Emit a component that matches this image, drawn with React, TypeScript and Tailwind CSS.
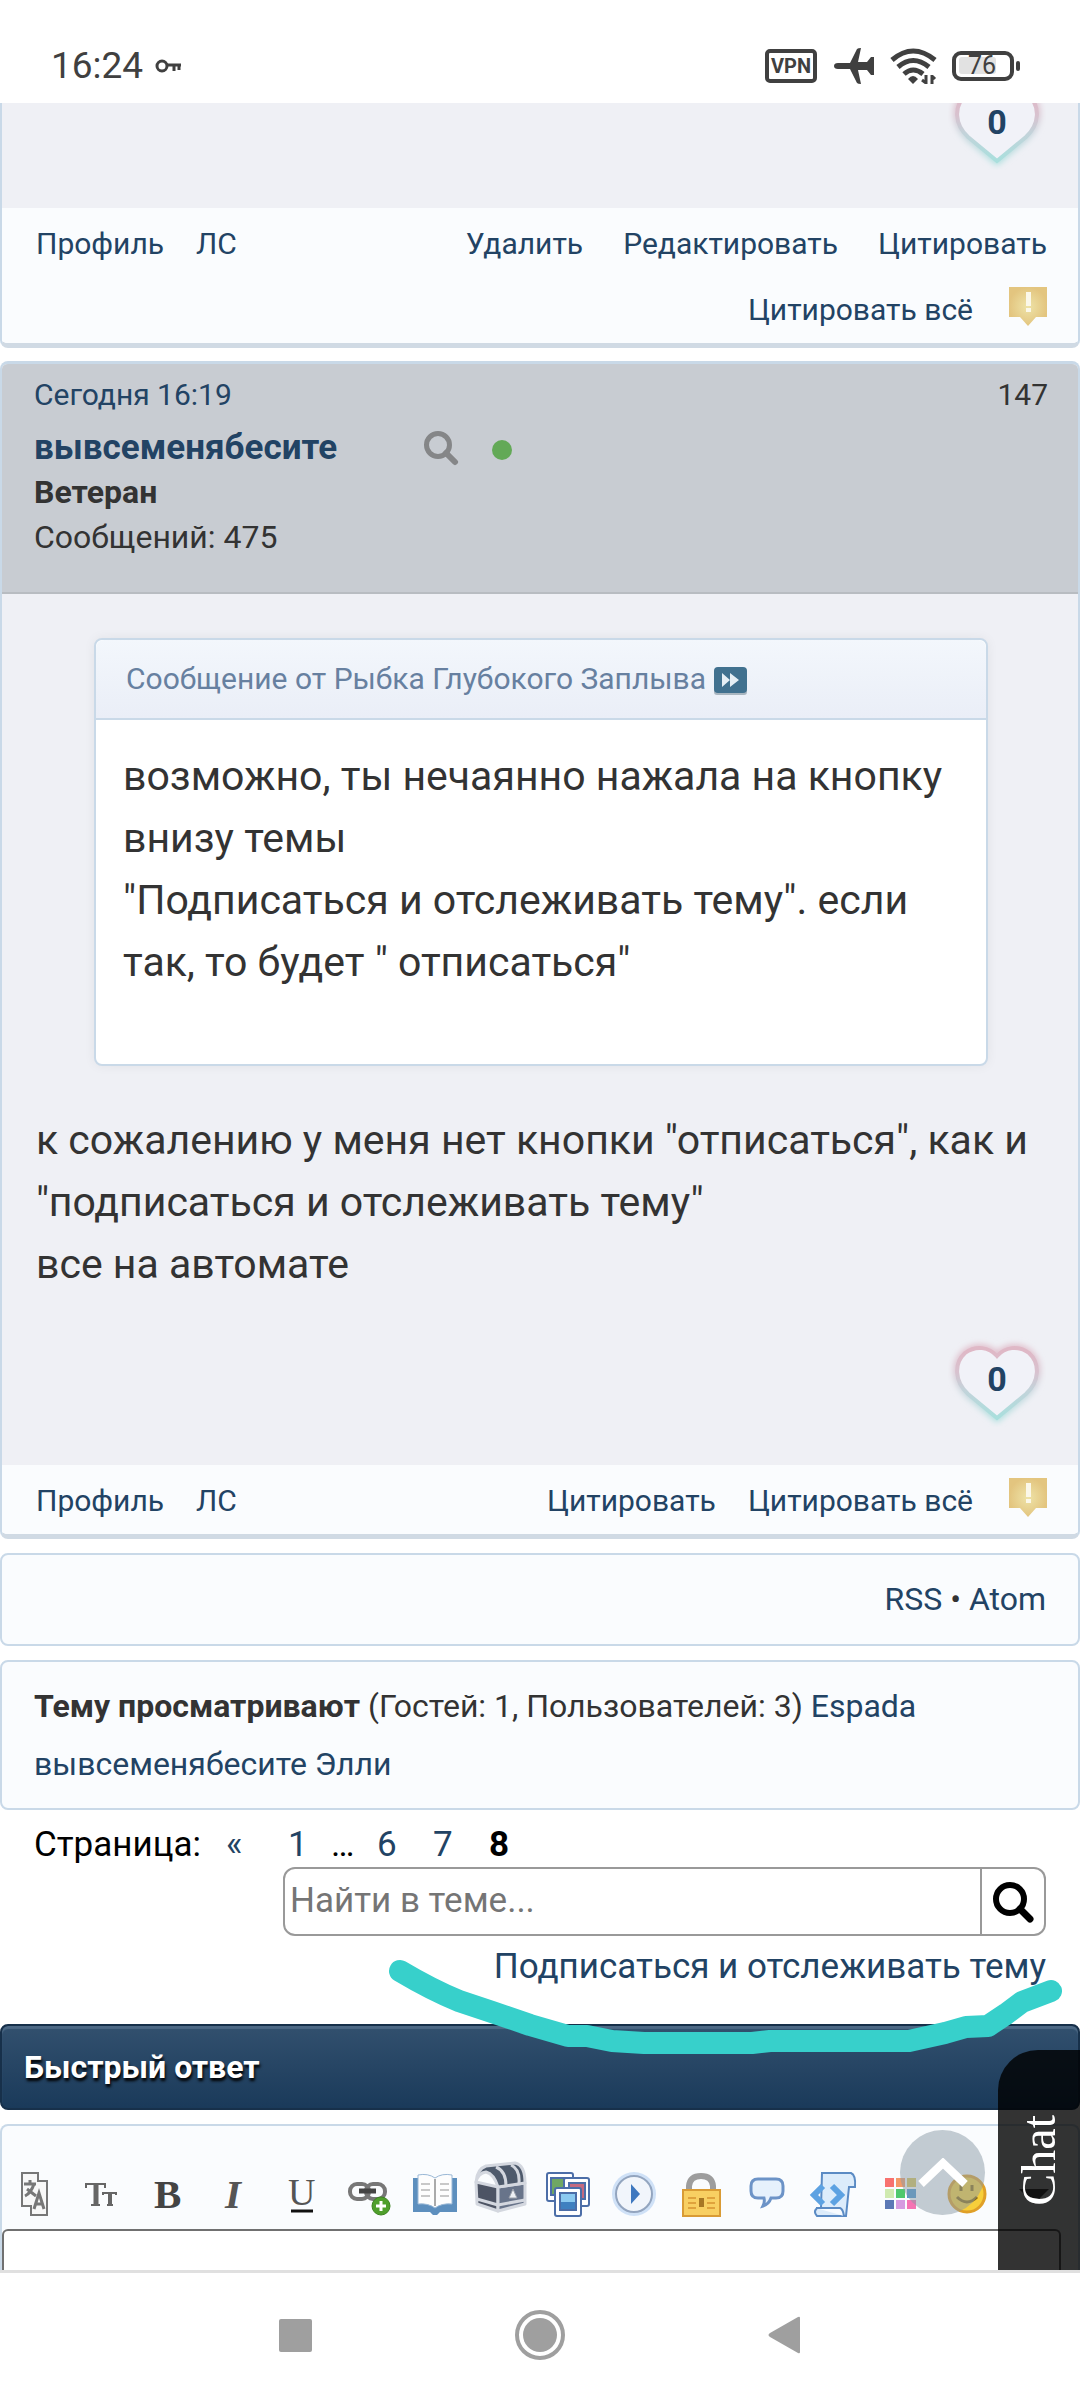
import React from 'react';

const LINK = 'text-[#224364]';

function A({ children, className = '' }: { children: React.ReactNode; className?: string }) {
  return (
    <a href="#" className={`${LINK} ${className}`}>
      {children}
    </a>
  );
}

function StatusBar() {
  return (
    <header className="flex h-[103px] shrink-0 items-center justify-between bg-white pt-7 pr-[60px] pl-[51px] text-[#404040]">
      <div className="flex items-center gap-3">
        <span className="text-[37px] leading-[44px]">16:24</span>
        <svg width="26" height="14" viewBox="0 0 26 14" fill="none" stroke="currentColor" strokeWidth="3">
          <circle cx="7" cy="7" r="5" />
          <path d="M12 6h14M19 6v6M24 6v5" />
        </svg>
      </div>
      <div className="flex items-center">
        <span className="flex h-[34px] w-[52px] items-center justify-center rounded-[5px] border-4 border-[#404040] text-[20px] leading-none font-bold">
          VPN
        </span>
        <svg className="ml-[16px]" width="42" height="36" viewBox="0 0 42 36" fill="currentColor">
          <path d="M1 18q0-3 4-3h12L24 1q1-1 4-1l-3 14h9l4-5h3v18h-3l-4-5h-9l3 14q-3 0-4-1L17 21H5q-4 0-4-3z" />
        </svg>
        <svg className="ml-[15px]" width="48" height="36" viewBox="0 0 48 36" fill="none" stroke="currentColor">
          <path d="M2 12Q23-6 45 12" strokeWidth="5" />
          <path d="M8 19Q23 6 39 19" strokeWidth="5" />
          <path d="M14 26Q23 18 33 26" strokeWidth="5" />
          <path d="M18 31q5-6 10 0l-5 5z" fill="currentColor" stroke="none" />
          <path d="M36 27v9M32 32l4 3M42 36v-9M45 31l-3-3" strokeWidth="3" />
        </svg>
        <div className="ml-[14px] flex h-[30px] w-[62px] items-center rounded-[9px] border-4 border-[#404040] px-[3px]">
          <span className="h-[17px] w-[37px] rounded-[3px] bg-[#e2e2e2] pl-[9px] text-[25px] leading-[18px]">76</span>
        </div>
        <span className="ml-[2px] h-[10px] w-[4px] rounded-[2px] bg-[#404040]" />
      </div>
    </header>
  );
}

function Heart() {
  return (
    <button type="button" className={`relative h-[90px] w-[98px] shrink-0 ${LINK}`}>
      <svg className="absolute inset-0" width="98" height="90" viewBox="0 0 98 90" fill="none">
        <defs>
          <linearGradient id="heartLine" x1="0" y1="0" x2="0" y2="1">
            <stop offset="0.05" stopColor="#dfb8c6" />
            <stop offset="0.35" stopColor="#d8c2cf" />
            <stop offset="0.6" stopColor="#c3d3da" />
            <stop offset="1" stopColor="#a9dfdd" />
          </linearGradient>
          <filter id="heartGlow" x="-20%" y="-20%" width="140%" height="140%">
            <feGaussianBlur stdDeviation="3" />
          </filter>
        </defs>
        <path
          d="M49 81L20 57C6 44 6 26 17 16C28 8 41 10 49 19C57 10 70 8 81 16C92 26 92 44 78 57Z"
          stroke="url(#heartLine)"
          strokeWidth="7"
          filter="url(#heartGlow)"
        />
        <path
          d="M49 81L20 57C6 44 6 26 17 16C28 8 41 10 49 19C57 10 70 8 81 16C92 26 92 44 78 57Z"
          stroke="url(#heartLine)"
          strokeWidth="4"
          fill="#f1f2f8"
        />
      </svg>
      <span className="relative block pb-[7px] text-[34px] leading-[78px] font-bold">0</span>
    </button>
  );
}

function ReportButton() {
  return (
    <button type="button" aria-label="Пожаловаться" className="mb-2 ml-9">
      <svg width="38" height="39" viewBox="0 0 38 39">
        <defs>
          <radialGradient id="reportFill">
            <stop offset="0" stopColor="#eee3a8" />
            <stop offset="1" stopColor="#e3c57f" />
          </radialGradient>
        </defs>
        <path d="M0 0h38v30H27l-8 9-8-9H0z" fill="url(#reportFill)" />
        <path d="M17 5h5v14h-5zM17 21h5v4h-5z" fill="#fbf8ea" />
      </svg>
    </button>
  );
}

function PostFooter({ own = false }: { own?: boolean }) {
  return (
    <footer className="flex justify-between bg-[#fafcfe] pt-[3px] pr-[31px] pl-[34px] text-[30px] leading-[66px]">
      <div className="flex gap-8">
        <A>Профиль</A>
        <A>ЛС</A>
      </div>
      {own ? (
        <div>
          <div className="flex justify-end gap-10">
            <A>Удалить</A>
            <A>Редактировать</A>
            <A>Цитировать</A>
          </div>
          <div className="flex items-center justify-end">
            <A>Цитировать всё</A>
            <ReportButton />
          </div>
        </div>
      ) : (
        <div className="flex items-center">
          <A className="mr-8">Цитировать</A>
          <A>Цитировать всё</A>
          <ReportButton />
        </div>
      )}
    </footer>
  );
}

function Post() {
  return (
    <article className="mt-[13px] overflow-hidden rounded-lg border-2 border-t-[3px] border-b-[5px] border-[#c9d9e8] border-b-[#d0dae4]">
      <div className="border-b-2 border-[#b8bcc1] bg-[#c8ccd2] pt-2 pr-[30px] pb-8 pl-8 text-[32px] leading-[45px] text-[#333]">
        <div className="mb-2 flex justify-between text-[30px]">
          <A>Сегодня 16:19</A>
          <span>147</span>
        </div>
        <div className="flex items-center">
          <A className="text-[35px] font-bold">вывсеменябесите</A>
          <button type="button" aria-label="Поиск" className="ml-[86px]">
            <svg width="36" height="36" viewBox="0 0 36 36" fill="none" stroke="#858688" strokeWidth="5">
              <circle cx="15" cy="15" r="11.500" />
              <path d="M23 23l9 9" strokeWidth="6" strokeLinecap="round" />
            </svg>
          </button>
          <span className="mt-1 ml-[33px] size-5 rounded-full bg-[#63a957]" />
        </div>
        <div className="font-bold">Ветеран</div>
        <div>Сообщений: 475</div>
      </div>
      <div className="bg-[#eff0f5] pt-[44px] text-[41px] leading-[62px] text-[#333]">
        <blockquote className="mr-[90px] ml-[92px] rounded-lg border-2 border-[#c9d9e8] bg-white shadow-[0_0_12px_rgba(0,0,0,0.06)]">
          <cite className="flex items-center rounded-t-lg border-b-2 border-[#c9d9e8] bg-linear-to-b from-[#f3f7fc] to-[#eaeef7] px-[30px] text-[30px] leading-[78px] text-[#6780a0] not-italic">
            Сообщение от Рыбка Глубокого Заплыва
            <a href="#" aria-label="К сообщению" className="mt-1 ml-2">
              <svg width="33" height="28" viewBox="0 0 33 28">
                <rect y="2" width="33" height="26" rx="3" fill="#a9b6c0" />
                <rect width="33" height="26" rx="4" fill="#41718f" />
                <path d="M8 6l8 7-8 7zM16 6l9 7-9 7z" fill="#e6eff5" />
              </svg>
            </a>
          </cite>
          <p className="px-[27px] pt-[25px] pb-[71px]">
            возможно, ты нечаянно нажала на кнопку внизу темы
            <br />
            "Подписаться и отслеживать тему". если так, то будет " отписаться"
          </p>
        </blockquote>
        <p className="pt-[43px] pr-6 pl-[34px]">
          к сожалению у меня нет кнопки "отписаться", как и "подписаться и отслеживать тему"
          <br />
          все на автомате
        </p>
        <div className="flex justify-end pt-[42px] pr-8 pb-[38px]">
          <Heart />
        </div>
      </div>
      <PostFooter />
    </article>
  );
}

function Pager() {
  return (
    <nav className="flex px-[34px] text-[35px] leading-[44px] text-black">
      <span className="w-[192px]">Страница:</span>
      <A className="w-[62px]">«</A>
      <A className="w-[43px]">1</A>
      <span className="w-[46px]">…</span>
      <A className="w-[56px]">6</A>
      <A className="w-[56px]">7</A>
      <strong>8</strong>
    </nav>
  );
}

const PALETTE = ['#f8726f', '#f39a68', '#d8c45a', '#cfeab0', '#4fc86c', '#4c96d0', '#5b78b5', '#d59be0', '#f573b3'];

const TOOLS: { name: string; icon: React.ReactNode }[] = [
  {
    name: 'Перевод',
    icon: (
      <g fill="#f8f8f8" stroke="#777" strokeWidth="2">
        <path d="M10 2h16v8h9v34H19v-9h-9z" />
        <path d="M12 13h12M18 9v4M22 13q-3 9-9 12M15 18l9 7" fill="none" strokeWidth="3" />
        <path d="M22 38l5-16 5 16M24 33h6" fill="none" strokeWidth="3" />
      </g>
    ),
  },
  {
    name: 'Размер',
    icon: (
      <g fill="none" stroke="#666">
        <path d="M7 17v-4h19v4M12 34h9" strokeWidth="2" />
        <path d="M17 13v21" strokeWidth="5" />
        <path d="M24 24v-2h13v2M28 34h6" strokeWidth="2" />
        <path d="M31 22v12" strokeWidth="4" />
      </g>
    ),
  },
  {
    name: 'Жирный',
    icon: (
      <text x="9" y="37" fontSize="41" fontWeight="bold" fontFamily="Liberation Serif, serif" fill="#444">B</text>
    ),
  },
  {
    name: 'Курсив',
    icon: (
      <text x="13" y="37" fontSize="41" fontWeight="bold" fontStyle="italic" fontFamily="Liberation Serif, serif" fill="#555">I</text>
    ),
  },
  {
    name: 'Подчёркнутый',
    icon: (
      <g>
        <text x="9" y="34" fontSize="38" fontFamily="Liberation Serif, serif" fill="#555">U</text>
        <path d="M12 40h22" stroke="#111" strokeWidth="3" />
      </g>
    ),
  },
  {
    name: 'Ссылка',
    icon: (
      <g fill="none" stroke="#777" strokeWidth="4">
        <rect x="5" y="13" width="19" height="15" rx="7" />
        <rect x="21" y="13" width="19" height="15" rx="7" />
        <path d="M14 20h17" stroke="#444" strokeWidth="5" />
        <circle cx="36" cy="35" r="9" fill="#4f9f2c" stroke="#3c8420" strokeWidth="1" />
        <path d="M36 30v10M31 35h10" stroke="#fff" strokeWidth="3" />
      </g>
    ),
  },
  {
    name: 'Спойлер',
    icon: (
      <g>
        <path d="M1 7h44v34H28l-3 3h-4l-3-3H1z" fill="#5d8fbe" />
        <path d="M6 4q10-2 17 3 7-5 17-3v29q-10-1-17 4-7-5-17-4z" fill="#fdfdfd" stroke="#9ab8d6" />
        <path d="M23 8v27" stroke="#aaa" strokeWidth="2" />
        <path d="M9 13h9M9 19h9M9 25h9M28 13h9M28 19h9M28 25h9" stroke="#c8c8c8" strokeWidth="2" />
      </g>
    ),
  },
  {
    name: 'Скрытый текст',
    icon: (
      <g stroke="#d3d7df" strokeWidth="3" strokeLinejoin="round">
        <path d="M-2 11L20 16V40L-1 33z" fill="#4d5464" />
        <path d="M20 16l27-4v21L20 40z" fill="#68748a" />
        <path d="M-2 11Q-1-2 8-5L37-8Q47-6 47 12L20 16Q16 3 8 1 0 2-2 11z" fill="#4e5a6c" />
        <path d="M18-4q10 4 10 19M33-6q9 4 8 18" fill="none" />
        <path d="M20 34l27-5M-1 28l21 6" fill="none" />
        <path d="M35 18l4 9h-8z" fill="#eef0f4" stroke="#9ba1ab" strokeWidth="1" />
      </g>
    ),
  },
  {
    name: 'Картинка',
    icon: (
      <g fill="#fff" stroke="#4c6ea8" strokeWidth="2">
        <rect x="2" y="2" width="26" height="28" rx="2" />
        <rect x="6" y="7" width="17" height="17" fill="#6fa763" />
        <rect x="19" y="7" width="25" height="28" rx="2" />
        <rect x="24" y="12" width="16" height="16" fill="#c46a80" />
        <rect x="10" y="17" width="26" height="28" rx="2" />
        <rect x="15" y="22" width="16" height="17" fill="#8ccaf0" />
        <path d="M16 31h14v7H16z" fill="#3f80c0" stroke="none" />
      </g>
    ),
  },
  {
    name: 'Видео',
    icon: (
      <g>
        <circle cx="23" cy="23" r="22" fill="#cfe1f7" />
        <circle cx="23" cy="23" r="18" fill="#f1f5fb" stroke="#93a5bf" strokeWidth="2" />
        <path d="M20 13l9 10-9 10z" fill="#3f78bf" />
      </g>
    ),
  },
  {
    name: 'Скрыть',
    icon: (
      <g>
        <path d="M11 21v-6q1-10 12-10t12 10v6" fill="none" stroke="#9d9d9d" strokeWidth="6" />
        <rect x="5" y="19" width="37" height="26" fill="#f8cf62" stroke="#d99b35" strokeWidth="2" />
        <path d="M10 27h8M29 27h8M10 32h8M29 32h8M10 37h8M29 37h8" stroke="#dfa23c" strokeWidth="2" />
        <path d="M21 27h5v9h-5z" fill="#a87724" />
      </g>
    ),
  },
  {
    name: 'Цитата',
    icon: (
      <path
        d="M14 8h18q7 0 7 7v5q0 7-7 7h-5q-2 6-8 8 2-4 1-8h-6q-7 0-7-7v-5q0-7 7-7z"
        fill="#e6f1fc"
        stroke="#6c93c7"
        strokeWidth="3"
      />
    ),
  },
  {
    name: 'Код',
    icon: (
      <g stroke="#5b8bc4" strokeWidth="2">
        <path d="M11 2h29q5 2 4 14h-6l-3 29H6q-4-4 0-8h4z" fill="#dcecfb" />
        <path d="M5 37h24q3 1 4 8" fill="#f7fbff" />
        <path d="M12 15l-9 9 9 9M21 15l9 9-9 9" fill="none" stroke="#5da2e2" strokeWidth="6" />
      </g>
    ),
  },
  {
    name: 'Цвет',
    icon: (
      <g>
        {PALETTE.map((color, i) => (
          <rect key={color} x={7 + (i % 3) * 11} y={7 + Math.floor(i / 3) * 11} width="9" height="9" fill={color} />
        ))}
      </g>
    ),
  },
  {
    name: 'Смайлы',
    icon: (
      <g fill="none" stroke="#8a6a10" strokeWidth="3">
        <circle cx="23" cy="23" r="18" fill="#f7cf3b" stroke="#e0a028" />
        <path d="M13 26q10 10 20 0" />
        <path d="M17 14v6M28 14v6" />
      </g>
    ),
  },
  { name: 'Ещё', icon: <path d="M8 18h30L23 33z" fill="#555" /> },
];

function ReplyForm() {
  return (
    <form className="mt-[14px] rounded-t-lg border-2 border-b-0 border-[#c9d9e8] bg-[#fafcfe]">
      <div className="grid grid-cols-16 pt-[45px] pr-[11px] pb-[12px]">
        {TOOLS.map((tool) => (
          <button key={tool.name} type="button" aria-label={tool.name} className="flex justify-center">
            <svg width="46" height="46" viewBox="0 0 46 46" className="overflow-visible">
              {tool.icon}
            </svg>
          </button>
        ))}
      </div>
      <div className="pr-[17px]">
        <textarea
          aria-label="Текст сообщения"
          className="block h-[41px] w-full resize-none rounded-t-md border-2 border-b-0 border-[#707070] bg-white"
        />
      </div>
    </form>
  );
}

export default function App() {
  return (
    <div className="flex min-h-screen flex-col bg-white font-[Roboto,sans-serif]">
      <StatusBar />

      <main className="relative overflow-hidden">
        <article className="overflow-hidden rounded-b-lg border-2 border-t-0 border-b-[5px] border-[#c9d9e8] border-b-[#d0dae4]">
          <div className="flex h-[105px] items-end justify-end bg-[#eff0f5] pr-8 pb-[38px]">
            <Heart />
          </div>
          <PostFooter own />
        </article>

        <Post />

        <div className="mt-[14px] rounded-lg border-2 border-[#c9d9e8] bg-[#fafcfe] px-8 py-[15px] text-right text-[32px] leading-[59px] text-[#333]">
          <A>RSS</A> • <A>Atom</A>
        </div>

        <div className="mt-[14px] rounded-lg border-2 border-[#c9d9e8] bg-[#fafcfe] px-8 py-[15px] text-[32px] leading-[58px] text-[#333]">
          <strong>Тему просматривают</strong> (Гостей: 1, Пользователей: 3) <A>Espada</A>
          <br />
          <A>вывсеменябесите</A> <A>Элли</A>
        </div>

        <div className="pt-[13px]">
          <Pager />
          <form className="mr-[34px] ml-[283px] flex h-[69px] text-[35px]">
            <input
              type="text"
              placeholder="Найти в теме..."
              aria-label="Найти в теме"
              className="min-w-0 flex-1 rounded-l-xl border-2 border-[#999] bg-white px-[5px] placeholder:text-[#757575]"
            />
            <button
              type="button"
              aria-label="Найти"
              className="flex w-16 items-center justify-center rounded-r-xl border-2 border-l-0 border-[#999] bg-white"
            >
              <svg width="42" height="42" viewBox="0 0 42 42" fill="none" stroke="#000" strokeWidth="6">
                <circle cx="18" cy="18" r="14" />
                <path d="M28 28l10 10" strokeWidth="7" strokeLinecap="round" />
              </svg>
            </button>
          </form>
        </div>

        <div className="relative">
          <div className="px-[34px] pt-[9px] pb-[35px] text-right text-[35px] leading-[44px]">
            <A>Подписаться и отслеживать тему</A>
          </div>
          <h2 className="rounded-lg border-2 border-[#17304a] bg-linear-to-b from-[#32506e] to-[#1a3a5a] px-[22px] text-[32px] leading-[82px] font-bold text-white shadow-[inset_0_3px_1px_#4d6985] [text-shadow:1px_3px_3px_#000]">
            Быстрый ответ
          </h2>
          {/* marker stroke under the subscribe link */}
          <svg className="pointer-events-none absolute top-0 right-0" width="700" height="140" viewBox="380 1936 700 140" fill="none">
            <path
              d="M400 1971Q432 1990 459 2001L492 2012L530 2025L568 2036H587L612 2041L644 2043H752L770 2041H909L945 2033L966 2027L988 2026L1006 2014L1022 2002L1051 1991"
              stroke="#37d0cb"
              strokeWidth="22"
              strokeLinecap="round"
              strokeLinejoin="round"
            />
          </svg>
        </div>

        <ReplyForm />

        <button
          type="button"
          aria-label="Наверх"
          className="absolute right-[95px] bottom-[55px] flex size-[85px] items-center justify-center rounded-full bg-[#8a99a6]/50"
        >
          <svg width="50" height="30" viewBox="0 0 50 30" fill="none" stroke="#fff" strokeWidth="8">
            <path d="M3 26L25 5l22 21" />
          </svg>
        </button>
        <button
          type="button"
          className="absolute right-0 bottom-0 flex h-[220px] w-[82px] items-center justify-center rounded-tl-[40px] bg-black/80 text-white"
        >
          <span className="rotate-180 font-['Liberation_Serif',serif] text-[48px] leading-[66px] [writing-mode:vertical-rl]">Chat</span>
        </button>
      </main>

      <nav className="flex flex-1 items-center justify-center gap-[203px] border-t-[3px] border-[#e0e0e0] bg-white pb-[3px] text-[#9f9f9f]">
        <button type="button" aria-label="Недавние">
          <svg width="33" height="33" viewBox="0 0 33 33" fill="currentColor">
            <rect width="33" height="33" rx="2" />
          </svg>
        </button>
        <button type="button" aria-label="Домой">
          <svg width="50" height="50" viewBox="0 0 50 50" fill="currentColor">
            <circle cx="25" cy="25" r="23" fill="none" stroke="currentColor" strokeWidth="4" />
            <circle cx="25" cy="25" r="17" />
          </svg>
        </button>
        <button type="button" aria-label="Назад">
          <svg width="33" height="38" viewBox="0 0 33 38" fill="currentColor">
            <path d="M2 17L30 1q2-1 2 1v34q0 2-2 1L2 21q-3-2 0-4z" />
          </svg>
        </button>
      </nav>
    </div>
  );
}
